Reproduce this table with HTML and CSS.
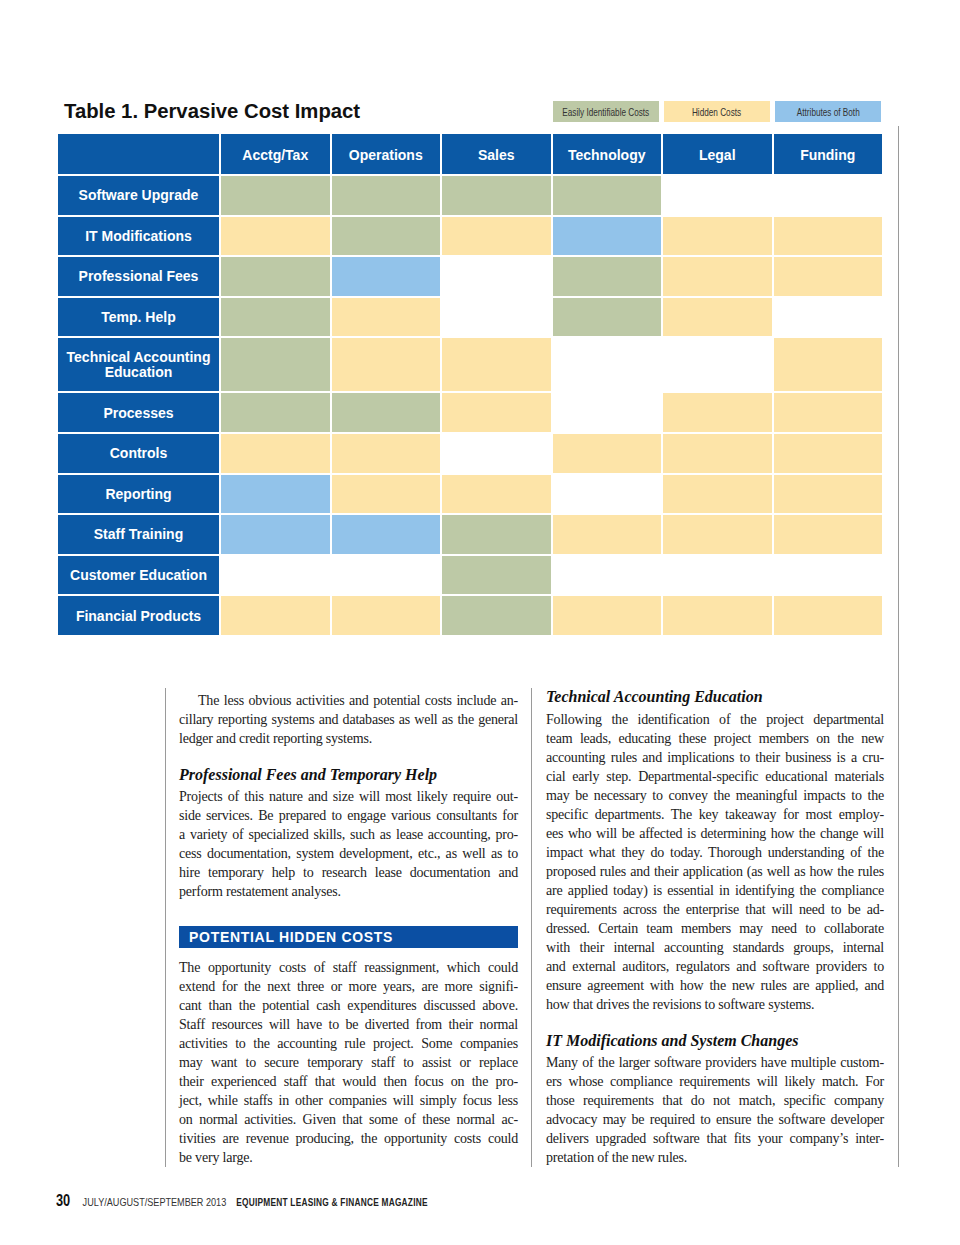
FILE: index.html
```html
<!DOCTYPE html>
<html>
<head>
<meta charset="utf-8">
<link rel="stylesheet" href="styles.css">
</head>
<body>
<div class="page">
  <div class="top">
    <h1 class="title">Table 1. Pervasive Cost Impact</h1>
    <div class="legend">
      <span class="key g"><span class="cond">Easily Identifiable Costs</span></span>
      <span class="key y"><span class="cond">Hidden Costs</span></span>
      <span class="key b"><span class="cond">Attributes of Both</span></span>
    </div>
  </div>
  <div class="main">
    <div class="grid">
      <div class="hd"></div>
      <div class="hd">Acctg/Tax</div>
      <div class="hd">Operations</div>
      <div class="hd">Sales</div>
      <div class="hd">Technology</div>
      <div class="hd">Legal</div>
      <div class="hd">Funding</div>

      <div class="lbl">Software Upgrade</div>
      <div class="c g"></div><div class="c g"></div><div class="c g"></div><div class="c g"></div><div class="c w"></div><div class="c w"></div>

      <div class="lbl">IT Modifications</div>
      <div class="c y"></div><div class="c g"></div><div class="c y"></div><div class="c b"></div><div class="c y"></div><div class="c y"></div>

      <div class="lbl">Professional Fees</div>
      <div class="c g"></div><div class="c b"></div><div class="c w"></div><div class="c g"></div><div class="c y"></div><div class="c y"></div>

      <div class="lbl">Temp. Help</div>
      <div class="c g"></div><div class="c y"></div><div class="c w"></div><div class="c g"></div><div class="c y"></div><div class="c w"></div>

      <div class="lbl">Technical Accounting<br>Education</div>
      <div class="c g"></div><div class="c y"></div><div class="c y"></div><div class="c w"></div><div class="c w"></div><div class="c y"></div>

      <div class="lbl">Processes</div>
      <div class="c g"></div><div class="c g"></div><div class="c y"></div><div class="c w"></div><div class="c y"></div><div class="c y"></div>

      <div class="lbl">Controls</div>
      <div class="c y"></div><div class="c y"></div><div class="c w"></div><div class="c y"></div><div class="c y"></div><div class="c y"></div>

      <div class="lbl">Reporting</div>
      <div class="c b"></div><div class="c y"></div><div class="c y"></div><div class="c w"></div><div class="c y"></div><div class="c y"></div>

      <div class="lbl">Staff Training</div>
      <div class="c b"></div><div class="c b"></div><div class="c g"></div><div class="c y"></div><div class="c y"></div><div class="c y"></div>

      <div class="lbl">Customer Education</div>
      <div class="c w"></div><div class="c w"></div><div class="c g"></div><div class="c w"></div><div class="c w"></div><div class="c w"></div>

      <div class="lbl">Financial Products</div>
      <div class="c y"></div><div class="c y"></div><div class="c g"></div><div class="c y"></div><div class="c y"></div><div class="c y"></div>
    </div>

    <div class="cols">
      <div class="col left">
        <p class="para first">
          <span class="ln indent">The less obvious activities and potential costs include an-</span>
          <span class="ln">cillary reporting systems and databases as well as the general</span>
          <span class="ln last">ledger and credit reporting systems.</span>
        </p>
        <h2 class="sub">Professional Fees and Temporary Help</h2>
        <p class="para">
          <span class="ln">Projects of this nature and size will most likely require out-</span>
          <span class="ln">side services. Be prepared to engage various consultants for</span>
          <span class="ln">a variety of specialized skills, such as lease accounting, pro-</span>
          <span class="ln">cess documentation, system development, etc., as well as to</span>
          <span class="ln">hire temporary help to research lease documentation and</span>
          <span class="ln last">perform restatement analyses.</span>
        </p>
        <h3 class="bar">POTENTIAL HIDDEN COSTS</h3>
        <p class="para">
          <span class="ln">The opportunity costs of staff reassignment, which could</span>
          <span class="ln">extend for the next three or more years, are more signifi-</span>
          <span class="ln">cant than the potential cash expenditures discussed above.</span>
          <span class="ln">Staff resources will have to be diverted from their normal</span>
          <span class="ln">activities to the accounting rule project. Some companies</span>
          <span class="ln">may want to secure temporary staff to assist or replace</span>
          <span class="ln">their experienced staff that would then focus on the pro-</span>
          <span class="ln">ject, while staffs in other companies will simply focus less</span>
          <span class="ln">on normal activities. Given that some of these normal ac-</span>
          <span class="ln">tivities are revenue producing, the opportunity costs could</span>
          <span class="ln last">be very large.</span>
        </p>
      </div>
      <div class="col right">
        <h2 class="sub top-sub">Technical Accounting Education</h2>
        <p class="para">
          <span class="ln">Following the identification of the project departmental</span>
          <span class="ln">team leads, educating these project members on the new</span>
          <span class="ln">accounting rules and implications to their business is a cru-</span>
          <span class="ln">cial early step. Departmental-specific educational materials</span>
          <span class="ln">may be necessary to convey the meaningful impacts to the</span>
          <span class="ln">specific departments. The key takeaway for most employ-</span>
          <span class="ln">ees who will be affected is determining how the change will</span>
          <span class="ln">impact what they do today. Thorough understanding of the</span>
          <span class="ln">proposed rules and their application (as well as how the rules</span>
          <span class="ln">are applied today) is essential in identifying the compliance</span>
          <span class="ln">requirements across the enterprise that will need to be ad-</span>
          <span class="ln">dressed. Certain team members may need to collaborate</span>
          <span class="ln">with their internal accounting standards groups, internal</span>
          <span class="ln">and external auditors, regulators and software providers to</span>
          <span class="ln">ensure agreement with how the new rules are applied, and</span>
          <span class="ln last">how that drives the revisions to software systems.</span>
        </p>
        <h2 class="sub">IT Modifications and System Changes</h2>
        <p class="para">
          <span class="ln">Many of the larger software providers have multiple custom-</span>
          <span class="ln">ers whose compliance requirements will likely match. For</span>
          <span class="ln">those requirements that do not match, specific company</span>
          <span class="ln">advocacy may be required to ensure the software developer</span>
          <span class="ln">delivers upgraded software that fits your company’s inter-</span>
          <span class="ln last">pretation of the new rules.</span>
        </p>
      </div>
    </div>
  </div>
  <div class="footer">
    <span class="foot-inner">
      <span class="pg">30</span>
      <span class="date">JULY/AUGUST/SEPTEMBER 2013</span>
      <span class="mag">EQUIPMENT LEASING &amp; FINANCE MAGAZINE</span>
    </span>
  </div>
</div>
</body>
</html>
```

FILE: styles.css
```css
html, body {
  margin: 0;
  padding: 0;
  background: #ffffff;
}
.page {
  width: 960px;
  padding-top: 101px;
  font-family: "Liberation Serif", "DejaVu Serif", serif;
  color: #222;
}
.top {
  display: flex;
  align-items: center;
  justify-content: space-between;
  margin-left: 64px;
  width: 817px;
  height: 21px;
}
.title {
  margin: 0;
  font-family: "Liberation Sans", Arial, sans-serif;
  font-weight: bold;
  font-size: 20.3px;
  letter-spacing: 0;
  color: #111;
  line-height: 21px;
}
.legend {
  display: flex;
  gap: 5px;
}
.key {
  display: flex;
  align-items: center;
  justify-content: center;
  width: 106px;
  height: 21px;
  overflow: hidden;
  font-family: "Liberation Sans", Arial, sans-serif;
  font-size: 10.5px;
  color: #333;
}
.cond {
  display: inline-block;
  white-space: nowrap;
  transform: scaleX(0.78);
}
.key.g { background: #bdc9a6; }
.key.y { background: #fde4a8; }
.key.b { background: #92c3ea; }

.main {
  margin: 4px 0 0 58px;
  width: 840px;
  border-right: 1px solid #9a9a9a;
  padding-top: 8px;
}
.grid {
  display: grid;
  width: 824px;
  grid-template-columns: 161px repeat(6, 1fr);
  grid-template-rows: 40px repeat(4, 38.6px) 53px repeat(6, 38.6px);
  gap: 2px;
}
.hd, .lbl {
  background: #0b59a5;
  color: #fff;
  font-family: "Liberation Sans", Arial, sans-serif;
  font-weight: bold;
  font-size: 14px;
  display: flex;
  align-items: center;
  justify-content: center;
  text-align: center;
  line-height: 15px;
}
.hd {
  padding-top: 3px;
}
.lbl {
  padding-top: 1px;
}
.c.g { background: #bdc9a6; }
.c.y { background: #fde4a8; }
.c.b { background: #92c3ea; }
.c.w { background: #fff; }

.cols {
  display: flex;
  margin: 53px 0 0 107px;
}
.col {
  width: 338px;
}
.col.left {
  border-left: 1px solid #9a9a9a;
  border-right: 1px solid #9a9a9a;
  padding: 3px 13px 0 13px;
  width: 339px;
}
.col.right {
  padding: 0 0 0 14px;
}
.para {
  margin: 0;
  font-size: 14px;
  line-height: 19px;
  letter-spacing: -0.2px;
  word-spacing: -2px;
}
.ln {
  display: block;
  text-align: justify;
  text-align-last: justify;
}
.ln.last {
  text-align-last: left;
  word-spacing: 0;
}
.ln.indent {
  text-indent: 19px;
}
.sub {
  margin: 18px 0 3px;
  font-style: italic;
  font-weight: bold;
  font-size: 16px;
  line-height: 18px;
  color: #111;
}
.sub.top-sub {
  margin-top: 0;
  margin-bottom: 4px;
}
.bar {
  margin: 25px 0 10px;
  height: 22px;
  background: #0b4fa3;
  color: #fff;
  font-family: "Liberation Sans", Arial, sans-serif;
  font-weight: bold;
  font-size: 14px;
  letter-spacing: 0.7px;
  line-height: 23px;
  padding-left: 10px;
}
.footer {
  margin: 26px 0 0 56px;
  height: 50px;
  line-height: 16px;
  font-family: "Liberation Sans", Arial, sans-serif;
}
.foot-inner {
  display: inline-block;
  white-space: nowrap;
  transform: scaleX(0.8);
  transform-origin: left center;
}
.pg {
  font-weight: bold;
  font-size: 16px;
  color: #111;
  margin-right: 11px;
}
.date {
  font-size: 11.4px;
  color: #333;
  margin-right: 8px;
}
.mag {
  font-weight: bold;
  font-size: 10.4px;
  letter-spacing: 0.3px;
  color: #222;
}
```
